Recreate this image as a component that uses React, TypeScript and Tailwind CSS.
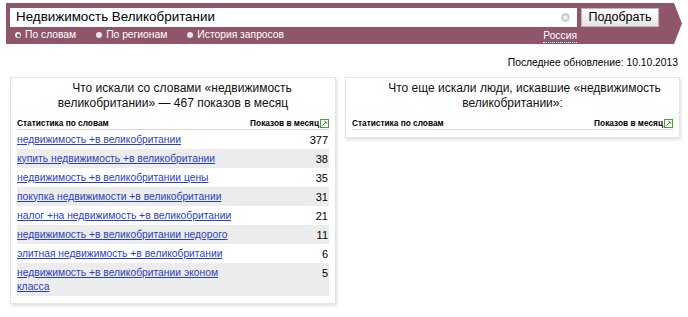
const rows: { text: string; count: number }[] = [
  { text: "недвижимость +в великобритании", count: 377 },
  { text: "купить недвижимость +в великобритании", count: 38 },
  { text: "недвижимость +в великобритании цены", count: 35 },
  { text: "покупка недвижимости +в великобритании", count: 31 },
  { text: "налог +на недвижимость +в великобритании", count: 21 },
  { text: "недвижимость +в великобритании недорого", count: 11 },
  { text: "элитная недвижимость +в великобритании", count: 6 },
  { text: "недвижимость +в великобритании эконом класса", count: 5 },
];

function ExportIcon() {
  return (
    <svg width="9" height="9" viewBox="0 0 9 9" className="inline-block ml-[1px]">
      <rect x="0.5" y="0.5" width="8" height="8" fill="#fff" stroke="#4f9a3c" />
      <path d="M2.5 6.5 L6 3 M4 2.8 H6.2 V5" stroke="#4f9a3c" strokeWidth="1" fill="none" />
    </svg>
  );
}

function Radio({ label, checked }: { label: string; checked?: boolean }) {
  return (
    <span className="flex items-center gap-[4px]">
      <span className="w-[6px] h-[6px] rounded-full bg-[#e6e6e6] flex items-center justify-center">
        {checked && <span className="w-[3px] h-[3px] rounded-full bg-[#555]" />}
      </span>
      <span>{label}</span>
    </span>
  );
}

function TableHead() {
  return (
    <div className="flex justify-between items-end text-[8.3px] font-bold text-black border-b border-[#d6d6d6] pb-[1px] leading-[10px]">
      <span>Статистика по словам</span>
      <span className="flex items-center">
        Показов в месяц
        <ExportIcon />
      </span>
    </div>
  );
}

export default function App() {
  return (
    <div
      className="w-[688px] h-[317px] bg-white relative overflow-hidden"
      style={{ fontFamily: '"Liberation Sans", Arial, sans-serif' }}
    >
      {/* search bar */}
      <div className="pt-[3px] pl-[6px]">
        <div className="w-[676px] h-[41px] bg-[#8f566b] [clip-path:polygon(0_0,calc(100%-8px)_0,100%_50%,calc(100%-8px)_100%,0_100%)] pl-[4px] pt-[5px]">
          <div className="flex gap-[4px]">
            <div className="w-[567px] h-[19px] bg-white flex items-center justify-between pl-[6px] pr-[7px] text-[13.4px] text-black">
              <span>Недвижимость Великобритании</span>
              <span className="w-[9px] h-[9px] rounded-full bg-[#cfcfcf] flex items-center justify-center">
                <svg width="5" height="5" viewBox="0 0 5 5">
                  <path d="M0.8 0.8 L4.2 4.2 M4.2 0.8 L0.8 4.2" stroke="#fff" strokeWidth="1.2" />
                </svg>
              </span>
            </div>
            <button className="w-[78px] h-[19px] border border-[#b9b9b9] bg-gradient-to-b from-white to-[#e4e4e4] text-[12.5px] text-black leading-none">
              Подобрать
            </button>
          </div>
          <div className="flex items-center w-[567px] h-[16px] text-[10.3px] text-white">
            <div className="flex gap-[20px] pl-[5px]">
              <Radio label="По словам" checked />
              <Radio label="По регионам" />
              <Radio label="История запросов" />
            </div>
            <span className="ml-auto border-b border-dotted border-white leading-[12px] mt-[2px]">Россия</span>
          </div>
        </div>
      </div>

      <div className="text-right pr-[10px] mt-[12px] text-[10.3px] text-black leading-[13px]">
        Последнее обновление: 10.10.2013
      </div>

      <div className="flex gap-[9px] items-start pl-[10px] mt-[8px]">
        {/* left panel */}
        <div className="w-[326px] border border-[#e4e4e4] shadow-[1px_2px_3px_rgba(0,0,0,0.12)] px-[6px] pt-[3px] pb-[7px]">
          <div className="text-[12px] text-[#111] leading-[15px] text-center">
            <span className="pl-[18px]">Что искали со словами «недвижимость</span>
            <br />
            великобритании» — 467 показов в месяц
          </div>
          <div className="mt-[7px]">
            <TableHead />
            {rows.map((r, i) => (
              <div
                key={r.text}
                className={`flex justify-between items-start text-[10.3px] leading-[14px] py-[2.5px] ${
                  i % 2 === 1 ? "bg-[#ececec]" : "bg-white"
                }`}
              >
                <a href="#" className="text-[#2a3fbf] underline w-[220px]">
                  {r.text}
                </a>
                <span className="text-black text-[11px] pr-[1px]">{r.count}</span>
              </div>
            ))}
          </div>
        </div>

        {/* right panel */}
        <div className="w-[335px] border border-[#e4e4e4] shadow-[1px_2px_3px_rgba(0,0,0,0.12)] px-[6px] pt-[3px] pb-[7px]">
          <div className="text-[12px] text-[#111] leading-[15px] text-center">
            <span className="pl-[24px]">Что еще искали люди, искавшие «недвижимость</span>
            <br />
            великобритании»:
          </div>
          <div className="mt-[7px]">
            <TableHead />
          </div>
        </div>
      </div>
    </div>
  );
}
